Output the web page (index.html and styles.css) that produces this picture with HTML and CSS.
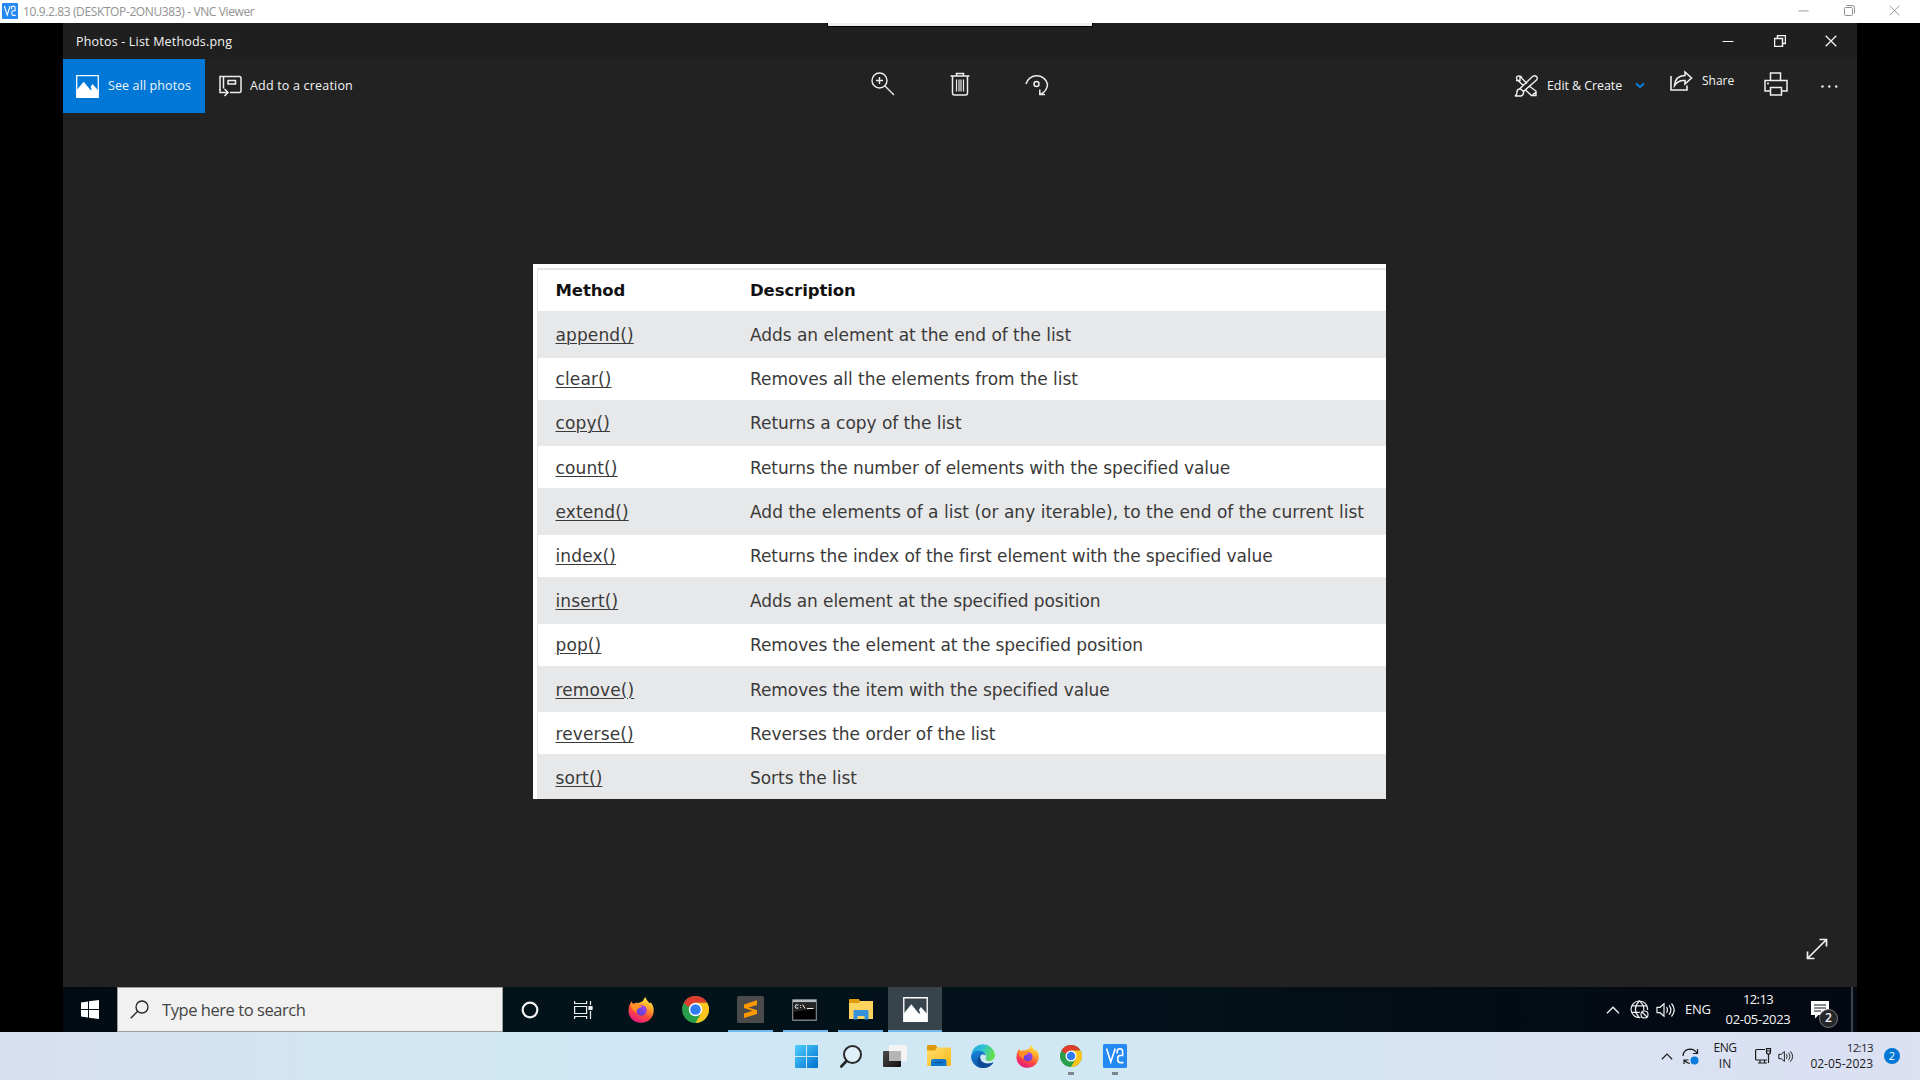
FILE: index.html
```html
<!DOCTYPE html>
<html lang="en">
<head>
<meta charset="utf-8">
<title>10.9.2.83 (DESKTOP-2ONU383) - VNC Viewer</title>
<link rel="stylesheet" href="styles.css">
</head>
<body>
<svg class="defs" width="0" height="0" aria-hidden="true">
  <defs>
    <linearGradient id="ff-body" x1="0.8" y1="0" x2="0.3" y2="1"><stop offset="0" stop-color="#fff14a"/><stop offset=".35" stop-color="#ffa62b"/><stop offset=".65" stop-color="#ff4a3d"/><stop offset="1" stop-color="#e31587"/></linearGradient>
    <linearGradient id="ff-core" x1="0.8" y1="0" x2="0.2" y2="1"><stop offset="0" stop-color="#a546f5"/><stop offset="1" stop-color="#5a3fd0"/></linearGradient>
    <linearGradient id="fold" x1="0" y1="0" x2="1" y2="1"><stop offset="0" stop-color="#ffdf73"/><stop offset="1" stop-color="#fcb713"/></linearGradient>
    <linearGradient id="win" x1="0" y1="0" x2="1" y2="1"><stop offset="0" stop-color="#4fd0ff"/><stop offset="1" stop-color="#0070cf"/></linearGradient>
    <linearGradient id="edge-top" x1="0" y1="0" x2="1" y2="0.3"><stop offset="0" stop-color="#1f9fe0"/><stop offset=".5" stop-color="#2fc3d8"/><stop offset="1" stop-color="#62de52"/></linearGradient>
    <linearGradient id="edge-low" x1="0" y1="0" x2="0.6" y2="1"><stop offset="0" stop-color="#1687dc"/><stop offset="1" stop-color="#0c4fa3"/></linearGradient>
    <linearGradient id="tv-dark" x1="0" y1="0" x2="1" y2="1"><stop offset="0" stop-color="#4a4a4a"/><stop offset="1" stop-color="#111"/></linearGradient>
    <symbol id="i-vnc" viewBox="0 0 24 24"><rect width="24" height="24" rx="1.500" fill="#2489f2"/><g fill="none" stroke="#fff" stroke-width="1.600"><path d="M3.500 4.500 7.800 18 12.200 4.500"/><path d="M14.200 9.500V7.300q0-2.600 2.700-2.600t2.700 2.600v4.200h-2.400q-2.400 0-2.400 2.500v2q0 2.600 2.700 2.600h3"/></g></symbol>
    <symbol id="i-firefox" viewBox="0 0 26 26"><path d="M1 10C1.600 7 2.600 5.300 4 4.200 4 5.500 4.500 6.400 5.500 7 7 6 9 5.600 10.500 6L15 4C15.500 2 16.500 .8 17.800 .2 18 3 20 4 21.500 6.200L23 5.500C25 8.500 26 11 25.700 14.500 25 21.300 19.800 25.800 13 25.800 5.500 25.800 .3 20 .5 13.500Z" fill="url(#ff-body)"/><circle cx="13.500" cy="13.300" r="5.200" fill="url(#ff-core)"/><path d="M2.500 7.500C5 6.200 8 6.500 10.300 8.200L14.500 9C13.500 10.700 11 10.500 9.600 12 8.300 13.500 8.500 15 9 16 5.500 14.500 3 11 2.500 7.500Z" fill="#ff9127"/></symbol>
    <symbol id="i-chrome" viewBox="0 0 48 48"><circle cx="24" cy="24" r="24" fill="#2a9f4b"/><path d="M3.200 12A24 24 0 0 1 44.800 12H24L13.600 18 9 18Z" fill="#df3c30"/><path d="M24 12H44.800A24 24 0 0 1 24 48L34.400 30Z" fill="#fcc41c"/><circle cx="24" cy="24" r="12" fill="#fff"/><circle cx="24" cy="24" r="9.300" fill="#2f7cf0"/></symbol>
    <symbol id="i-min" viewBox="0 0 12 12"><path d="M.5 6.500h11" stroke="currentColor" fill="none"/></symbol>
    <symbol id="i-restore" viewBox="0 0 12 12"><path d="M.5 3.500h8v8h-8zM3.500 3V.5h8v8H9" stroke="currentColor" fill="none"/></symbol>
    <symbol id="i-close" viewBox="0 0 12 12"><path d="M.7.7l10.600 10.600M11.300.7.7 11.300" stroke="currentColor" fill="none"/></symbol>
    <symbol id="i-photo" viewBox="0 0 24 24"><path d="M.75.75h22.500v22.500H.75z" fill="none" stroke="#fff" stroke-width="1.300"/><path d="M1 15.500 8 7l6 7.300 1.700 1.900.6-1.200-1-2.800 1.900-2.700 5.800 6.500v8H1z" fill="#fff"/></symbol>
    <symbol id="i-speaker" viewBox="0 0 20 16"><path d="M1 5.300h3L8 1.800v12.400L4 10.700H1zM10.500 5.200q2 2.800 0 5.600M13 3.300q3.800 4.700 0 9.400M15.500 1.500q5.500 6.500 0 13" fill="none" stroke="currentColor" stroke-width="1.200"/></symbol>
    <symbol id="i-up" viewBox="0 0 14 8"><path d="M1 7.200 7 1.200l6 6" fill="none" stroke="currentColor" stroke-width="1.400"/></symbol>
  </defs>
</svg>

<div class="screen">
  <header class="viewer-bar">
    <svg class="viewer-logo" width="16" height="16"><use href="#i-vnc"/></svg>
    <span class="t viewer-title">10.9.2.83 (DESKTOP-2ONU383) - VNC Viewer</span>
    <div class="viewer-controls">
      <svg width="11" height="11"><use href="#i-min"/></svg>
      <svg width="11" height="11" viewBox="0 0 11 11"><path d="M.5 3.500q0-1 1-1h6q1 0 1 1v6q0 1-1 1h-6q-1 0-1-1zM2.500.5h6q2 0 2 2v6" fill="none" stroke="currentColor"/></svg>
      <svg width="11" height="11"><use href="#i-close"/></svg>
    </div>
  </header>

  <main class="remote">
    <div class="desktop">
      <section class="photos">
        <div class="photos-title">
          <span class="t photos-name">Photos - List Methods.png</span>
          <div class="photos-controls">
            <svg width="12" height="12"><use href="#i-min"/></svg>
            <svg width="12" height="12" stroke-width="1.500"><use href="#i-restore"/></svg>
            <svg width="12" height="12" stroke-width="1.300"><use href="#i-close"/></svg>
          </div>
        </div>
        <div class="toolbar">
          <div class="tools-left">
            <div class="see-all"><svg width="23" height="23"><use href="#i-photo"/></svg><span class="t t-seeall">See all photos</span></div>
            <div class="add-to">
              <svg width="23" height="22" viewBox="0 0 23 22" fill="none" stroke="#eee" stroke-width="1.500"><path d="M1 15V1.500h19.500q1.500 0 1.500 1.500v13q0 1.500-1.500 1.500H11M4.500 1.500v12"/><path d="M9 5.500h7.500v3.500H9z"/><path d="M1 14v3.500h7M5.500 14l3.500 3.500L5.500 21"/></svg>
              <span class="t t-addto">Add to a creation</span>
            </div>
          </div>
          <div class="tools-mid">
            <svg width="24" height="24" viewBox="0 0 24 24" fill="none" stroke="#eee" stroke-width="1.400"><circle cx="8.500" cy="8.500" r="7.500"/><path d="M14 14l9 9M8.500 5v7M5 8.500h7"/></svg>
            <svg width="20" height="24" viewBox="0 0 20 24" fill="none" stroke="#eee" stroke-width="1.500"><path d="M.5 4h19M6.500 4V1.500h7V4M2.500 4v17q0 2 2 2h11q2 0 2-2V4"/><path d="M6.500 7.500v12M9 7.500v12M11 7.500v12M13.500 7.500v12" stroke-width="1.200"/></svg>
            <svg width="24" height="24" viewBox="0 0 24 24" fill="none" stroke="#eee" stroke-width="1.500"><path d="M1 12A11 10.500 0 0 1 22.500 12q0 7-7 10.200"/><circle cx="11.500" cy="12" r="2.500"/><path d="M14.800 17.500V22.500H20"/></svg>
          </div>
          <div class="tools-right">
            <svg class="ic-edit" width="23" height="22" viewBox="0 0 23 22" fill="none" stroke="#eee" stroke-width="1.400"><path d="M17.500 1.500q2.500-1.500 4 0t0 3.500L8.500 16.500l-3.500-3zM5 14q-3 0-3 3t-2 4h6q3-1 2.500-4.500"/><path d="M1.500 3q0-2 2.500-2t3 2.500l5 5M1.500 3q0 2 2 3l5 4.500M14 11l7 5v4.500h-4.500l-6-5.500M21.500 16.500l-5 4.500M5 1.500v4h-4"/></svg>
            <span class="t t-edit">Edit &amp; Create</span>
            <svg class="ic-down" width="10" height="7" viewBox="0 0 10 7"><path d="M1 1.200l4 4 4-4" fill="none" stroke="#0a7ad8" stroke-width="2"/></svg>
            <svg class="ic-share" width="23" height="20" viewBox="0 0 23 20" fill="none" stroke="#eee" stroke-width="1.600"><path d="M1 5v14h16v-4.500"/><path d="M4.500 14.500Q5 5 15 4.500V1l6.500 6-6.500 6V9.500Q8 9 4.500 14.500z"/></svg>
            <span class="t t-share">Share</span>
            <svg class="ic-print" width="24" height="24" viewBox="0 0 24 24" fill="none" stroke="#eee" stroke-width="1.500"><path d="M6.500 8.500V1h10v7.500M6.500 19H1V8.500h22V19h-5.500M6.500 15.500h11V23h-11z"/><path d="M3 11.500h2"/></svg>
            <svg class="ic-more" width="17" height="3" viewBox="0 0 17 3" fill="#eee"><circle cx="1.500" cy="1.500" r="1.200"/><circle cx="8.300" cy="1.500" r="1.200"/><circle cx="15.200" cy="1.500" r="1.200"/></svg>
          </div>
        </div>
        <div class="viewport">
          <div class="picture">
            <div class="methods">
              <div class="row head"><span>Method</span><span>Description</span></div>
              <div class="row gray"><u>append()</u><span>Adds an element at the end of the list</span></div>
              <div class="row"><u>clear()</u><span>Removes all the elements from the list</span></div>
              <div class="row gray"><u>copy()</u><span>Returns a copy of the list</span></div>
              <div class="row"><u>count()</u><span class="snug">Returns the number of elements with the specified value</span></div>
              <div class="row gray"><u>extend()</u><span class="wide">Add the elements of a list (or any iterable), to the end of the current list</span></div>
              <div class="row"><u>index()</u><span class="snug">Returns the index of the first element with the specified value</span></div>
              <div class="row gray"><u>insert()</u><span class="snug">Adds an element at the specified position</span></div>
              <div class="row"><u>pop()</u><span class="snug">Removes the element at the specified position</span></div>
              <div class="row gray"><u>remove()</u><span class="snug">Removes the item with the specified value</span></div>
              <div class="row"><u>reverse()</u><span>Reverses the order of the list</span></div>
              <div class="row gray"><u>sort()</u><span>Sorts the list</span></div>
            </div>
          </div>
          <svg class="ic-full" width="22" height="22" viewBox="0 0 22 22" fill="none" stroke="#f0f0f0" stroke-width="1.700"><path d="M1.500 20.500l19-19M13.500 1.500h7v7M1.500 13.500v7h7"/></svg>
        </div>
      </section>

      <nav class="taskbar10">
        <div class="start10"><svg width="18" height="19" viewBox="0 0 18 19" fill="#fff"><path d="M0 2.500l7-1V9H0zM8 1.300L18 0v9H8zM0 10h7v7.500l-7-1zM8 10h10v9L8 17.700z"/></svg></div>
        <div class="search10">
          <svg width="19" height="19" viewBox="0 0 19 19" fill="none" stroke="#222" stroke-width="1.300"><circle cx="12" cy="7" r="6"/><path d="M7.700 11.300.7 18.300"/></svg>
          <span class="t t-search">Type here to search</span>
        </div>
        <div class="apps10">
          <div class="app cortana"><svg width="18" height="18"><circle cx="9" cy="9" r="7.300" fill="none" stroke="#f2f2f2" stroke-width="2.200"/></svg></div>
          <div class="app taskview"><svg width="19" height="18" viewBox="0 0 19 18" fill="none" stroke="#eee" stroke-width="1.200"><path d="M.6 0v2.500h12V0M.6 18v-2.500h12V18M.6 5.500h12v7H.6zM16.500 0v4M16.500 10v8"/><path d="M15 5.500h3v3h-3z" fill="#eee"/></svg></div>
          <div class="app"><svg width="26" height="26"><use href="#i-firefox"/></svg></div>
          <div class="app"><svg width="27" height="27"><use href="#i-chrome"/></svg></div>
          <div class="app open"><svg width="27" height="27" viewBox="0 0 27 27"><rect width="27" height="27" rx="1.500" fill="#4a4a4a"/><path d="M7 8.500l13-4.200v4.600L11.500 11.600 20 14.300v3.800L7 22v-4.500l8.500-2.800L7 12z" fill="#ff9800"/></svg></div>
          <div class="app open console"><svg width="25" height="22" viewBox="0 0 25 22"><rect width="25" height="22" rx="1" fill="#777e84"/><path d="M1 1h23v2H1z" fill="#b9bec2"/><path d="M1.300 3.500h22.400v17H1.300z" fill="#000"/><path d="M1.300 3.500h22.400v6L1.300 13z" fill="#252525"/><path d="M6.500 6Q3 5 3 7.500T6.500 9M8.500 6v.9M8.500 8.200v.9M10.500 5.500l2.500 4M15 9.500h6.500" stroke="#eee" fill="none"/></svg></div>
          <div class="app open"><svg width="24" height="21" viewBox="0 0 24 21"><path d="M0 1q0-1 1-1h9l1 2h12v18H0z" fill="#df9d0e"/><path d="M0 4h10l1-2h13v18H0z" fill="#ffd45e"/><path d="M4.500 20.500V12q0-1 1-1h13q1 0 1 1v8.500h-4V17h-7v3.500z" fill="#3692dc"/></svg></div>
          <div class="app active"><svg width="25" height="25"><use href="#i-photo"/></svg></div>
        </div>
        <div class="tray10">
          <svg class="up10" width="14" height="8"><use href="#i-up"/></svg>
          <svg class="globe" width="19" height="19" viewBox="0 0 19 19" fill="none" stroke="#eee" stroke-width="1.200"><path d="M10.500 17.500A8.300 8.300 0 1 1 17.600 10M9.300.9Q1.500 9.300 9.300 17.600M9.300.9Q15 6 13.500 10.500M1.800 5.800h15M1.800 12.300h8"/><circle cx="14.500" cy="14.500" r="3.500"/><path d="M12 12l5 5"/></svg>
          <svg class="spk10" width="20" height="16"><use href="#i-speaker"/></svg>
          <span class="t t-eng10">ENG</span>
          <div class="clock10"><span class="t t-time10">12:13</span><span class="t t-date10">02-05-2023</span></div>
          <div class="notes"><svg width="18" height="18" viewBox="0 0 18 18"><path d="M0 0h18v14H7.500L4 17.500V14H0z" fill="#fff"/><path d="M3 4h12M3 7h12M3 10h7" stroke="#111722"/></svg><span class="count10 t">2</span></div>
          <div class="peek"></div>
        </div>
      </nav>
    </div>
    <div class="drop-handle"></div>
  </main>

  <footer class="taskbar11">
    <div class="apps11">
      <div class="a11"><svg width="23" height="23" viewBox="0 0 23 23" fill="url(#win)"><path d="M1 0h10v11H0V1q0-1 1-1zM12 0h10q1 0 1 1v10H12zM0 12h11v11H1q-1 0-1-1zM12 12h11v10q0 1-1 1H12z"/></svg></div>
      <div class="a11"><svg width="22" height="23" viewBox="0 0 22 23"><circle cx="12.500" cy="9.500" r="8.500" fill="#dff0f8" stroke="#2a2a2a" stroke-width="2"/><path d="M6.500 16 1.300 21.500" stroke="#222" stroke-width="2.600" stroke-linecap="round"/></svg></div>
      <div class="a11"><svg width="24" height="22" viewBox="0 0 24 22"><rect y="6" width="18" height="16" rx="1" fill="url(#tv-dark)"/><rect x="6" width="18" height="16" rx="1" fill="#f4f4f4"/><path d="M6 6h12v10H6z" fill="#b5b5b5"/></svg></div>
      <div class="a11"><svg width="24" height="22" viewBox="0 0 24 22"><path d="M0 1q0-1 1-1h7.500l2 2.500V6H0z" fill="#dc9a0c"/><path d="M0 5.500h8l2-3h13q1 0 1 1V20q0 1-1 1H1q-1 0-1-1z" fill="url(#fold)"/><path d="M4 21v-4.500q0-2.500 2.500-2.500h10.500q2.500 0 2.500 2.500V21z" fill="#0f78cf"/><path d="M8 17.500h8" stroke="#0a589f" stroke-width="1.500"/></svg></div>
      <div class="a11"><svg width="24" height="24" viewBox="0 0 24 24"><path d="M.2 10.500A12 12 0 0 1 24 11c0 4-3 6-6 6-2.500 0-4-1-3.500-2.200 1.500-1.800 1-5.800-3-6.300C6 7 1.500 8 .2 10.500z" fill="url(#edge-top)"/><path d="M0 12.500C.5 9 3.500 6.800 7.500 6.800c4.500 0 7 2.500 7 5.200-.5-2-4.500-2.500-5.300.5-.8 4 3.300 8 9.300 7 2-.3 3.200-1.200 3.700-1-2 3.300-5.700 5.500-10.200 5.500A12 12 0 0 1 0 12.500z" fill="url(#edge-low)"/><path d="M9.200 12.500c-.8 4 3.300 8 9.300 7 2-.3 3.200-1.200 3.700-1-2 3.300-5.700 5.500-10.200 5.500C5 21.500 5 14 9.200 12.500z" fill="#0d4a94"/></svg></div>
      <div class="a11"><svg width="23" height="23"><use href="#i-firefox"/></svg></div>
      <div class="a11 running"><svg width="22" height="22"><use href="#i-chrome"/></svg></div>
      <div class="a11 running"><svg width="24" height="24"><use href="#i-vnc"/></svg></div>
    </div>
    <div class="tray11">
      <svg class="up11" width="12" height="7"><use href="#i-up"/></svg>
      <svg class="sync" width="17" height="17" viewBox="0 0 17 17" fill="none" stroke="#1b1b1b" stroke-width="1.200"><path d="M1 8Q1.500 1.500 8 1.200q4.500 0 7 4M15.500 1v4.500H11M2 16v-4h4.500M2.500 12.500Q5 15.500 8 15.500"/><circle cx="12.500" cy="12.500" r="4" fill="#0a7adb" stroke="none"/></svg>
      <div class="lang11"><span class="t t-eng11">ENG</span><span class="t">IN</span></div>
      <svg class="net" width="17" height="16" viewBox="0 0 17 16" fill="none" stroke="#1b1b1b" stroke-width="1.200"><path d="M10 1.500H1.500Q.6 1.500.6 2.500v8.500q0 1 1 1H12M5 12v3M9.500 12v3M3 15h9M11.500.6h4V4q0 2-2 2t-2-2zM13.500 6v9M11.500 3h4"/></svg>
      <svg class="spk11" width="16" height="13"><use href="#i-speaker"/></svg>
      <div class="clock11"><span class="t t-time11">12:13</span><span class="t">02-05-2023</span></div>
      <span class="count11 t">2</span>
    </div>
  </footer>
</div>
</body>
</html>
```
FILE: styles.css
```css
* { box-sizing: border-box; }
body { margin: 0; background: #000; font-family: "Open Sans", "Noto Sans", sans-serif; font-size: 12px; }
svg { display: block; flex: none; overflow: visible; }
.defs { position: absolute; }
.t { white-space: nowrap; display: inline-block; flex: none; }
.screen { width: 1920px; height: 1080px; display: flex; flex-direction: column; overflow: hidden; }

/* VNC Viewer window frame */
.viewer-bar { height: 23px; background: #fff; color: #919191; display: flex; align-items: center; padding: 0 20px 0 2px; }
.viewer-logo { margin-top: -1px; }
.viewer-title { margin-left: 5px; line-height: 23px; letter-spacing: -0.380px; }
.viewer-controls { display: flex; gap: 34.500px; margin-left: auto; margin-top: -2px; }

.remote { height: 1009px; background: #000; padding: 0 63px; position: relative; }
.drop-handle { position: absolute; left: 827px; top: 0; width: 266px; height: 4px; background: #f0f0f0; border: 1px solid #000; border-top: 0; }
.desktop { width: 1794px; height: 1009px; display: flex; flex-direction: column; }

/* Photos app */
.photos { height: 964px; background: #222; display: flex; flex-direction: column; }
.photos-title { height: 36px; background: #1f1f1f; color: #f4f4f4; display: flex; align-items: center; justify-content: space-between; padding: 0 20px 0 13px; }
.photos-name { font-size: 12.500px; letter-spacing: 0.190px; }
.photos-controls { display: flex; gap: 39.500px; }
.toolbar { height: 60px; display: flex; color: #f4f4f4; border-bottom: 1px solid #1e1e1e; }
.tools-left, .tools-mid, .tools-right { display: flex; align-items: flex-start; flex: none; }
.tools-left { width: 808px; }
.see-all { width: 142px; height: 54px; background: #0078d7; display: flex; align-items: center; padding-left: 13px; }
.see-all .t { margin: -2px 0 0 9px; font-size: 12.500px; letter-spacing: 0.110px; }
.add-to { height: 54px; display: flex; align-items: center; padding-left: 14px; }
.add-to .t { margin: -2px 0 0 8px; font-size: 12.500px; letter-spacing: 0.190px; }
.tools-mid { width: 178px; justify-content: space-between; padding-top: 13px; }
.tools-right { width: 342px; height: 54px; align-items: center; margin-left: auto; }
.t-edit { width: 79px; margin: -2px 0 0 9px; font-size: 12.500px; letter-spacing: -0.080px; }
.ic-down { margin: -1px 0 0 9px; }
.ic-share { margin: -10px 0 0 25px; }
.t-share { width: 34px; margin: -11px 0 0 9px; }
.ic-print { margin: -5px 0 0 28px; }
.ic-more { margin: 1px 0 0 33px; }

.viewport { height: 868px; padding: 145px 0 0 470px; display: flex; align-items: flex-start; }
.picture { width: 853px; height: 535px; background: #fff; padding: 4px 0 0 4px; overflow: hidden; flex: none; }
.methods { border-left: 1.500px solid #e4e5e7; border-top: 2px solid #e4e5e7; font: 17px "DejaVu Sans", Verdana, sans-serif; color: #3a3a3a; letter-spacing: -0.040px; }
.row { display: grid; grid-template-columns: 194.500px 1fr; align-items: center; padding: 1px 0 0 17.500px; height: 42.200px; white-space: nowrap; }
.row.head { height: 41px; padding-top: 0; color: #111; font-weight: 700; font-size: 16.500px; letter-spacing: -0.100px; }
.row.gray { height: 46.500px; background: #e7e8ea; }
.row u { text-underline-offset: 2px; text-decoration-thickness: 1px; letter-spacing: 0.120px; }
.row .snug { letter-spacing: -0.084px; }
.row .wide { letter-spacing: 0.017px; }
.ic-full { margin: 674px 0 0 420px; }

/* Remote Windows 10 taskbar */
.taskbar10 { height: 45px; background: linear-gradient(90deg, #020b14, #03131a 25%, #03121a 60%, #030c14 80%, #040813); display: flex; color: #f4f4f4; }
.start10 { width: 54px; display: flex; align-items: center; justify-content: center; }
.search10 { width: 386px; background: #f1f1f1; border: 1px solid #9d9d9d; display: flex; align-items: center; padding-left: 12px; color: #444; font-size: 16.500px; }
.search10 .t { margin-left: 13px; letter-spacing: -0.440px; }
.apps10 { display: flex; }
.app { width: 55px; height: 45px; display: flex; align-items: center; justify-content: center; }
.cortana, .console { padding-right: 2px; }
.taskview { padding-right: 4px; }
.open { background: linear-gradient(#76b9ed, #76b9ed) center bottom / 45px 2px no-repeat; }
.active { width: 54px; background: linear-gradient(#76b9ed, #76b9ed) center bottom / 54px 2px no-repeat #37444b; }
.tray10 { display: flex; align-items: center; margin-left: auto; }
.globe { margin-left: 10px; }
.spk10 { margin-left: 7px; }
.t-eng10 { width: 26px; margin-left: 9px; font-size: 13px; letter-spacing: -0.300px; margin-top: -1px; }
.clock10 { width: 66px; margin-left: 14px; display: flex; flex-direction: column; align-items: center; line-height: 20px; font-size: 13px; margin-top: -1px; }
.t-time10 { letter-spacing: -0.600px; }
.t-date10 { letter-spacing: -0.280px; }
.notes { width: 40px; margin-left: 20px; position: relative; }
.count10 { position: absolute; left: 8px; top: 8px; width: 19px; height: 19px; border: 1px solid #777; border-radius: 50%; background: #26282c; text-align: center; line-height: 16px; font-weight: 600; }
.peek { width: 2px; height: 45px; background: #3d414b; margin-right: 4px; }

/* Local Windows 11 taskbar */
.taskbar11 { height: 48px; background: linear-gradient(90deg, #d8dfef, #d2e6f3 18%, #cfe7f4 32%, #d1e8f4 60%, #d9e2f3 80%, #dbe0f3); display: flex; justify-content: space-between; padding-left: 784.500px; color: #1b1b1b; }
.apps11 { display: flex; }
.a11 { width: 44.100px; height: 48px; display: flex; align-items: center; justify-content: center; }
.running { background: linear-gradient(#7a858c, #7a858c) center 40px / 6px 3px no-repeat; }
.tray11 { display: flex; align-items: center; width: 259px; }
.sync { margin-left: 9px; }
.lang11 { width: 24px; margin-left: 14px; display: flex; flex-direction: column; align-items: center; line-height: 16px; }
.t-eng11 { letter-spacing: -0.400px; }
.net { margin-left: 18px; }
.spk11 { margin-left: 6px; }
.clock11 { width: 63px; margin-left: 16px; display: flex; flex-direction: column; align-items: flex-end; line-height: 16px; }
.t-time11 { font-size: 11.500px; letter-spacing: -0.600px; }
.count11 { width: 16px; height: 16px; border-radius: 50%; background: #0078d4; color: #fff; margin-left: 11px; text-align: center; line-height: 16px; font-size: 11px; }
```
